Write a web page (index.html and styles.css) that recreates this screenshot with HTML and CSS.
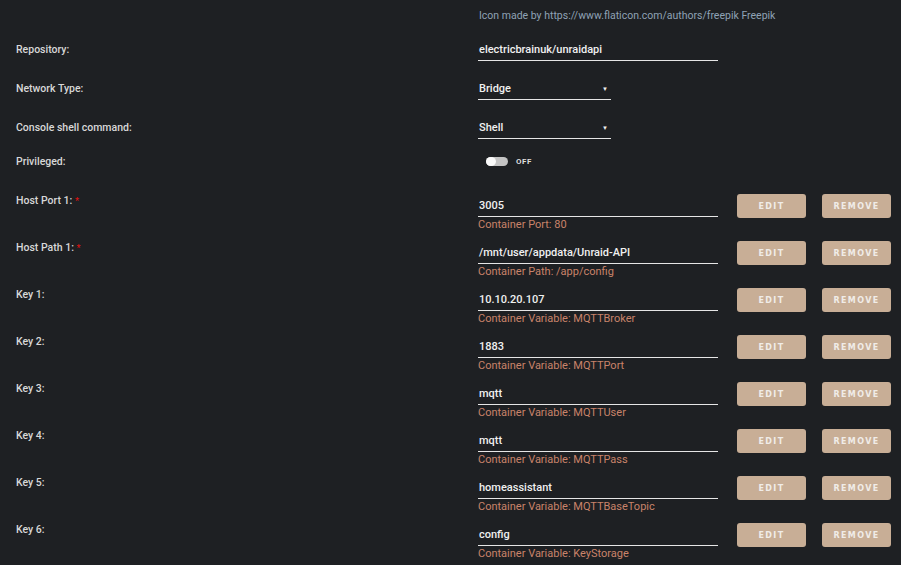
FILE: index.html
```html
<!DOCTYPE html>
<html lang="en">

<head>
    <meta charset="UTF-8">
    <meta name="viewport" content="width=device-width, initial-scale=1.0">
    <title>Update Container</title>
    <link rel="stylesheet" href="styles.css">
</head>

<body>
    <div class="container">
        <div class="credit">Icon made by https://www.flaticon.com/authors/freepik Freepik</div>

        <div class="row row-repo">
            <label>Repository:</label>
            <div class="field field-wide"><span class="value">electricbrainuk/unraidapi</span></div>
        </div>

        <div class="row row-select">
            <label>Network Type:</label>
            <div class="field field-select"><span class="value">Bridge</span><span class="arrow">&#9660;</span></div>
        </div>

        <div class="row row-select">
            <label>Console shell command:</label>
            <div class="field field-select"><span class="value">Shell</span><span class="arrow">&#9660;</span></div>
        </div>

        <div class="row row-toggle">
            <label>Privileged:</label>
            <div class="toggle-wrap">
                <span class="toggle"><span class="knob"></span></span>
                <span class="toggle-text">OFF</span>
            </div>
        </div>

        <div class="row config">
            <label>Host Port 1: <span class="req">*</span></label>
            <div class="cell">
                <div class="field field-wide"><span class="value">3005</span></div>
                <div class="desc">Container Port: 80</div>
            </div>
            <button class="btn">EDIT</button>
            <button class="btn">REMOVE</button>
        </div>

        <div class="row config">
            <label>Host Path 1: <span class="req">*</span></label>
            <div class="cell">
                <div class="field field-wide"><span class="value">/mnt/user/appdata/Unraid-API</span></div>
                <div class="desc">Container Path: /app/config</div>
            </div>
            <button class="btn">EDIT</button>
            <button class="btn">REMOVE</button>
        </div>

        <div class="row config">
            <label>Key 1:</label>
            <div class="cell">
                <div class="field field-wide"><span class="value">10.10.20.107</span></div>
                <div class="desc">Container Variable: MQTTBroker</div>
            </div>
            <button class="btn">EDIT</button>
            <button class="btn">REMOVE</button>
        </div>

        <div class="row config">
            <label>Key 2:</label>
            <div class="cell">
                <div class="field field-wide"><span class="value">1883</span></div>
                <div class="desc">Container Variable: MQTTPort</div>
            </div>
            <button class="btn">EDIT</button>
            <button class="btn">REMOVE</button>
        </div>

        <div class="row config">
            <label>Key 3:</label>
            <div class="cell">
                <div class="field field-wide"><span class="value">mqtt</span></div>
                <div class="desc">Container Variable: MQTTUser</div>
            </div>
            <button class="btn">EDIT</button>
            <button class="btn">REMOVE</button>
        </div>

        <div class="row config">
            <label>Key 4:</label>
            <div class="cell">
                <div class="field field-wide"><span class="value">mqtt</span></div>
                <div class="desc">Container Variable: MQTTPass</div>
            </div>
            <button class="btn">EDIT</button>
            <button class="btn">REMOVE</button>
        </div>

        <div class="row config">
            <label>Key 5:</label>
            <div class="cell">
                <div class="field field-wide"><span class="value">homeassistant</span></div>
                <div class="desc">Container Variable: MQTTBaseTopic</div>
            </div>
            <button class="btn">EDIT</button>
            <button class="btn">REMOVE</button>
        </div>

        <div class="row config">
            <label>Key 6:</label>
            <div class="cell">
                <div class="field field-wide"><span class="value">config</span></div>
                <div class="desc">Container Variable: KeyStorage</div>
            </div>
            <button class="btn">EDIT</button>
            <button class="btn">REMOVE</button>
        </div>
    </div>
</body>

</html>
```

FILE: styles.css
```css
body {
    margin: 0;
    background-color: #1e2023;
    font-family: Roboto, "Liberation Sans", sans-serif;
    font-size: 11px;
    color: #e4e4e4;
}

.container {
    padding: 9px 0 0 16px;
}

.credit {
    margin-left: 463px;
    height: 14px;
    line-height: 14px;
    color: #8fa2b5;
    font-size: 10.5px;
}

.row {
    display: flex;
    align-items: center;
}

.row label {
    width: 462px;
    flex-shrink: 0;
    font-size: 10.5px;
    font-weight: 500;
    line-height: 14px;
    color: #d8d8d8;
}

.row-repo {
    margin-top: 15px;
}

.row-select {
    margin-top: 16px;
}

.row-toggle {
    margin-top: 11px;
    height: 23px;
}

.field {
    height: 22px;
    line-height: 23px;
    border-bottom: 1px solid #e6e6e6;
    display: flex;
    justify-content: space-between;
    padding-left: 1px;
    box-sizing: content-box;
}

.field-wide {
    width: 239px;
}

.field-select {
    width: 132px;
}

.value {
    font-weight: 500;
    color: #f0f0f0;
}

.arrow {
    font-size: 6px;
    margin-right: 3px;
    color: #f0f0f0;
}

.toggle-wrap {
    display: flex;
    align-items: center;
    padding-left: 8px;
}

.toggle {
    width: 22px;
    height: 9px;
    border-radius: 5px;
    background-color: #c4c4c4;
    display: flex;
    align-items: center;
}

.knob {
    width: 10px;
    height: 9px;
    border-radius: 50%;
    background-color: #fafafa;
}

.toggle-text {
    margin-left: 8px;
    font-size: 8px;
    font-weight: 700;
    letter-spacing: 0.5px;
    color: #dedede;
}

.config {
    align-items: flex-start;
    height: 47px;
}

.row-toggle + .config {
    margin-top: 21px;
}

.req {
    color: #d11;
    font-size: 9px;
}

.cell {
    width: 240px;
}

.desc {
    line-height: 14px;
    margin-top: 1px;
    color: #c9836a;
    font-size: 11px;
}

.btn {
    width: 69px;
    height: 24px;
    margin-left: 19px;
    border: none;
    border-radius: 3px;
    background-color: #c8ae96;
    color: #f0ece8;
    font-family: "DejaVu Sans", sans-serif;
    font-size: 8px;
    font-weight: 700;
    letter-spacing: 1.4px;
    padding: 0;
}

.btn + .btn {
    margin-left: 16px;
}
```
